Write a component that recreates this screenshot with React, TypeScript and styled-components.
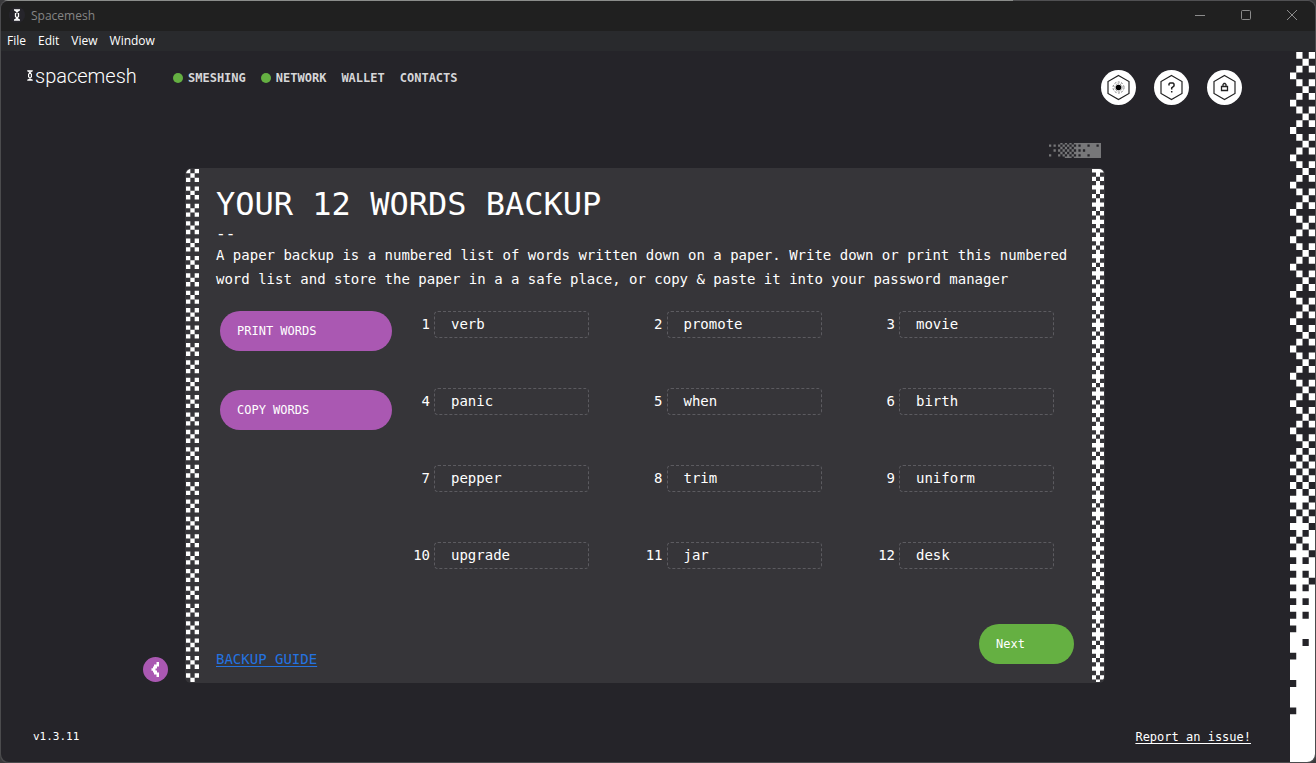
import React from 'react';
import styled, { createGlobalStyle } from 'styled-components';

const mono = `"DejaVu Sans Mono", "Liberation Mono", monospace`;
const sans = `"Open Sans", "Noto Sans", sans-serif`;

const colors = {
  frame: '#4b4b4d',
  titleBar: '#202020',
  menuBar: '#292a2d',
  page: '#252429',
  card: '#363539',
  purple: '#aa58b2',
  green: '#65b042',
  link: '#2473e0',
  white: '#ffffff',
};

const GlobalStyle = createGlobalStyle`
  *, *::before, *::after { box-sizing: border-box; }
  body { margin: 0; background: #3a3a3c; }
  button { border: 0; padding: 0; margin: 0; background: none; font: inherit; color: inherit; cursor: pointer; }
  ol, ul, h1, p { margin: 0; padding: 0; list-style: none; font-weight: 400; }
  svg { display: block; }
`;

const Frame = styled.div`
  display: flex;
  flex-direction: column;
  min-height: 100vh;
  padding: 1px;
  background: linear-gradient(90deg, #8b8d8b 0 77%, #505052 77%) top / 100% 1px no-repeat, ${colors.frame};
  border-radius: 8px;
`;

const AppWindow = styled.div`
  flex: 1;
  display: flex;
  flex-direction: column;
  background: ${colors.page};
  color: ${colors.white};
  font-family: ${mono};
  font-size: 14px;
  border-radius: 8px;
  overflow: hidden;
`;

const TitleBar = styled.div`
  display: flex;
  align-items: center;
  height: 30px;
  padding: 0 0 2px 8px;
  background: ${colors.titleBar};
  font-family: ${sans};
  font-size: 12px;
  color: #858585;
`;

const TitleText = styled.span`
  flex: 1;
  margin-left: 6px;
`;

const WindowButton = styled.button`
  display: flex;
  align-items: center;
  justify-content: center;
  width: 46px;
  height: 28px;
  color: #8c8c8c;
`;

const MenuBar = styled.nav`
  display: flex;
  align-items: center;
  gap: 12px;
  height: 20px;
  padding-left: 6px;
  background: ${colors.menuBar};
  font-family: ${sans};
  font-size: 12px;
  line-height: 20px;
`;

const Body = styled.div`
  flex: 1;
  display: flex;
`;

const Main = styled.div`
  flex: 1;
  min-width: 0;
  display: flex;
  flex-direction: column;
  align-items: stretch;
  padding: 0 39px 15px 32px;
`;

const Header = styled.header`
  display: flex;
  align-items: flex-start;
  margin: 0 9px 38px -6px;
  padding-top: 19px;
`;

const Logo = styled.div`
  display: flex;
  align-items: center;
  gap: 2px;
  width: 146px;
  height: 11px;
`;

const Wordmark = styled.span`
  font-family: Roboto, sans-serif;
  font-size: 20px;
  font-weight: 300;
  line-height: 12px;
`;

const Nav = styled.nav`
  flex: 1;
  display: flex;
  gap: 15px;
`;

const NavLink = styled.a`
  display: flex;
  align-items: center;
  gap: 5px;
  height: 16px;
  font-size: 12px;
  font-weight: 700;
  color: #d6d6d8;
  text-decoration: none;
`;

const StatusDot = styled.span`
  width: 10px;
  height: 10px;
  border-radius: 50%;
  background: ${colors.green};
`;

const IconButtons = styled.div`
  display: flex;
  gap: 18px;
`;

const RoundButton = styled.button`
  width: 35px;
  height: 35px;
  border-radius: 50%;
  background: ${colors.white};
`;

const CardArea = styled.div`
  position: relative;
  align-self: center;
  width: 920px;
  margin-left: 6px;
`;

const ProgressRow = styled.div`
  display: flex;
  justify-content: flex-end;
  padding: 0 4px 10px 0;
`;

const Card = styled.section`
  display: flex;
  justify-content: space-between;
  min-height: 515px;
  padding: 1px;
  background: ${colors.card};
  border-radius: 6px;
  overflow: hidden;
`;

const CardEdge = styled.div<{ $width: number; $radius: string }>`
  flex: none;
  position: relative;
  width: ${(p) => p.$width}px;
  border-radius: ${(p) => p.$radius};
  overflow: hidden;
`;

const CardContent = styled.div`
  flex: 1;
  display: flex;
  flex-direction: column;
  padding: 15px 18px 11px 17px;
`;

const Title = styled.h1`
  font-size: 32px;
  line-height: 40px;
`;

const Dashes = styled.div`
  font-size: 16px;
  line-height: 19px;
`;

const Description = styled.p`
  line-height: 24px;
`;

const Backup = styled.div`
  flex: 1;
  display: flex;
  justify-content: space-between;
  padding: 20px 20px 0 4px;
`;

const Actions = styled.div`
  display: flex;
  flex-direction: column;
  gap: 39px;
`;

const PillButton = styled.button<{ $color: string; $width: number }>`
  width: ${(p) => p.$width}px;
  height: 40px;
  padding-left: 17px;
  border-radius: 20px;
  background: ${(p) => p.$color};
  font-size: 12px;
  text-align: left;
`;

const WordGrid = styled.ol`
  display: grid;
  grid-template-columns: repeat(3, 180px);
  grid-auto-rows: 27px;
  justify-content: space-between;
  align-content: start;
  row-gap: 50px;
  width: 645px;
`;

const WordItem = styled.li`
  display: flex;
  gap: 4px;
  line-height: 26px;
`;

const WordNumber = styled.span`
  width: 21px;
  text-align: right;
`;

const WordBox = styled.span`
  flex: 1;
  padding-left: 16px;
  border: 1px dashed #5c5b60;
  border-radius: 4px;
  line-height: 24px;
`;

const CardFooter = styled.div`
  display: flex;
  align-items: flex-end;
  justify-content: space-between;
`;

const GuideLink = styled.a`
  color: ${colors.link};
  line-height: 24px;
  text-underline-offset: 2px;
`;

const NextWrap = styled.div`
  padding-bottom: 7px;
`;

const BackButton = styled.button`
  position: absolute;
  left: -42px;
  bottom: 1px;
  width: 25px;
  height: 25px;
  border-radius: 50%;
  background: ${colors.purple};
`;

const Footer = styled.footer`
  display: flex;
  justify-content: space-between;
  margin-top: auto;
  line-height: 20px;
`;

const Version = styled.span`
  font-size: 11px;
`;

const IssueLink = styled.a`
  font-size: 12px;
  color: ${colors.white};
  text-underline-offset: 2px;
`;

const SideBand = styled.div`
  flex: none;
  position: relative;
  width: 25px;
  margin-top: 1px;
`;

const StretchedSvg = styled.svg`
  position: absolute;
  inset: 0;
  width: 100%;
  height: 100%;
`;

function cellsPath(rows: string[]) {
  let d = '';
  rows.forEach((row, y) => {
    for (let x = 0; x < row.length; x += 1) {
      if (row[x] === 'X') d += `M${x} ${y}h1v1h-1z`;
    }
  });
  return d;
}

function repeatRows(pattern: string[], count: number) {
  return Array.from({ length: count }, (_, i) => pattern[i % pattern.length]);
}

const bandRows = [
  ...repeatRows(['.X.X', '..X.', '.X.X', 'X...'], 59),
  'X.X.', '.X.X', 'X.X.', '.X.X', 'X.X.', '.X.X', 'XXX.', '.X.X', 'X.X.', '.X.X',
  'XXX.', '.X.X', 'X.XX', '.X.X', 'XXX.', '.X.X', 'XXXX', '.X.X', 'XXX.', '.X.X',
  'XXXX', '.X.X', 'XXXX', '.X.X', 'XXXX', '.XXX', 'XXXX', 'XX.X', 'XXXX', '.XXX',
  'XXXX', 'XXXX', 'XXXX', '.XXX', 'XXXX', 'XXXX', 'XXXX', '.XXX',
  ...repeatRows(['XXXX'], 7),
];

const leftEdge = repeatRows(['X.X', '.X.', 'X.X', '...'], 118);
const rightEdge = repeatRows(['XXX', '.X.', 'X.X', '.X.'], 120);

const progressRows = [
  '.....X.X.X.XXXXXXXXXXXX',
  'X.X.X.X.X.X.X.XXX.XXX.X',
  '.....X.X.X.XXXXXXXXXXXX',
  '..X.X.X.X.X.X.X.XXXXXXX',
  '.....X.X.X.XXXXXXXXXXXX',
  'X...X.X.X.X.X.XXX.XXXXX',
  '.......XXX.XXXXXXXXXXXX',
];

function Cells({ rows, viewBox }: { rows: string[]; viewBox: string }) {
  return (
    <StretchedSvg viewBox={viewBox} preserveAspectRatio="none" aria-hidden="true">
      <path d={cellsPath(rows)} fill="#fff" />
    </StretchedSvg>
  );
}

const HELIX = 'M0 1h6M0 11h6M1 1l3.500 3.500v3L1 11M5 1 1.500 4.500v3L5 11';

function Hexagon({ children }: { children: React.ReactNode }) {
  return (
    <svg width="35" height="35" viewBox="0 0 35 35" fill="none" stroke="#222" aria-hidden="true">
      <path d="M17.5 5.500 28 11.500v12L17.500 29.500 7 23.500v-12z" strokeWidth="1.200" />
      {children}
    </svg>
  );
}

const words = ['verb', 'promote', 'movie', 'panic', 'when', 'birth', 'pepper', 'trim', 'uniform', 'upgrade', 'jar', 'desk'];

const navItems = [
  { label: 'SMESHING', status: true },
  { label: 'NETWORK', status: true },
  { label: 'WALLET', status: false },
  { label: 'CONTACTS', status: false },
];

export default function App() {
  return (
    <>
      <GlobalStyle />
      <Frame>
        <AppWindow>
          <TitleBar>
            <svg width="16" height="16" viewBox="0 0 16 16" fill="none" aria-hidden="true">
              <circle cx="8" cy="8" r="8" fill="#26252b" />
              <path d={HELIX} transform="translate(5 2)" stroke="#fff" strokeWidth="1.300" />
            </svg>
            <TitleText>Spacemesh</TitleText>
            <WindowButton aria-label="Minimize">
              <svg width="10" height="10" stroke="currentColor"><path d="M0 5.500h10" /></svg>
            </WindowButton>
            <WindowButton aria-label="Maximize">
              <svg width="10" height="10" fill="none" stroke="currentColor"><rect x=".5" y=".5" width="9" height="9" rx="1" /></svg>
            </WindowButton>
            <WindowButton aria-label="Close">
              <svg width="10" height="10" stroke="currentColor"><path d="M0 0l10 10M10 0L0 10" /></svg>
            </WindowButton>
          </TitleBar>
          <MenuBar aria-label="Application menu">
            <button>File</button>
            <button>Edit</button>
            <button>View</button>
            <button>Window</button>
          </MenuBar>
          <Body>
            <Main>
              <Header>
                <Logo>
                  <svg width="6" height="11" viewBox="0 0 6 12" fill="none" stroke="#fff" aria-hidden="true">
                    <path d={HELIX} strokeWidth="1.300" />
                  </svg>
                  <Wordmark>spacemesh</Wordmark>
                </Logo>
                <Nav aria-label="Main">
                  {navItems.map((item) => (
                    <NavLink href="#" key={item.label}>
                      {item.status && <StatusDot />}
                      {item.label}
                    </NavLink>
                  ))}
                </Nav>
                <IconButtons>
                  <RoundButton aria-label="Settings">
                    <Hexagon>
                      <circle cx="17.500" cy="17.500" r="2.800" fill="#000" stroke="none" />
                      <circle cx="17.500" cy="17.500" r="3.700" stroke="#555" strokeWidth="1" strokeDasharray="1 1.300" />
                      <circle cx="17.500" cy="17.500" r="5.500" stroke="#777" strokeWidth="1" strokeDasharray="2 1.500" />
                    </Hexagon>
                  </RoundButton>
                  <RoundButton aria-label="Help">
                    <Hexagon>
                      <path d="M15 15.500v-1.500l1-1h3l1 1v2l-2.300 1.800v1.700M17.700 21v1.500" strokeWidth="1.500" />
                    </Hexagon>
                  </RoundButton>
                  <RoundButton aria-label="Lock">
                    <Hexagon>
                      <path d="M14.500 16.500h6v4h-6zM16 16.500v-2l1-1h1l1 1v2" strokeWidth="1.300" />
                    </Hexagon>
                  </RoundButton>
                </IconButtons>
              </Header>
              <CardArea>
                <ProgressRow>
                  <svg width="52" height="15" viewBox="0 0.400 23 6.200" preserveAspectRatio="none" aria-hidden="true">
                    <path d={cellsPath(progressRows)} fill="#777779" />
                  </svg>
                </ProgressRow>
                <Card>
                  <CardEdge $width={13} $radius="5px 0 0 5px">
                    <Cells rows={leftEdge} viewBox="0 0 3 118" />
                  </CardEdge>
                  <CardContent>
                    <Title>YOUR 12 WORDS BACKUP</Title>
                    <Dashes>--</Dashes>
                    <Description>
                      A paper backup is a numbered list of words written down on a paper. Write down or print this
                      numbered word list and store the paper in a a safe place, or copy &amp; paste it into your password manager
                    </Description>
                    <Backup>
                      <Actions>
                        <PillButton $color={colors.purple} $width={172}>PRINT WORDS</PillButton>
                        <PillButton $color={colors.purple} $width={172}>COPY WORDS</PillButton>
                      </Actions>
                      <WordGrid>
                        {words.map((word, i) => (
                          <WordItem key={word}>
                            <WordNumber>{i + 1}</WordNumber>
                            <WordBox>{word}</WordBox>
                          </WordItem>
                        ))}
                      </WordGrid>
                    </Backup>
                    <CardFooter>
                      <GuideLink href="#">BACKUP GUIDE</GuideLink>
                      <NextWrap>
                        <PillButton $color={colors.green} $width={95}>Next</PillButton>
                      </NextWrap>
                    </CardFooter>
                  </CardContent>
                  <CardEdge $width={12} $radius="0 5px 5px 0">
                    <Cells rows={rightEdge} viewBox="0 0.200 3 119.400" />
                  </CardEdge>
                </Card>
                <BackButton aria-label="Back">
                  <svg width="25" height="25" viewBox="0 0 25 25" fill="#fff" aria-hidden="true">
                    <path d="M13.500 5H16V9.500H14V11.500H12.500V13.500H14V15.500H16V20H13.500V17.500H11V15.500H10V13.800H8.500V11.200H10V9.500H11V7.500H13.500Z" />
                  </svg>
                </BackButton>
              </CardArea>
              <Footer>
                <Version>v1.3.11</Version>
                <IssueLink href="#">Report an issue!</IssueLink>
              </Footer>
            </Main>
            <SideBand>
              <Cells rows={bandRows} viewBox="0 0 4 104" />
            </SideBand>
          </Body>
        </AppWindow>
      </Frame>
    </>
  );
}
